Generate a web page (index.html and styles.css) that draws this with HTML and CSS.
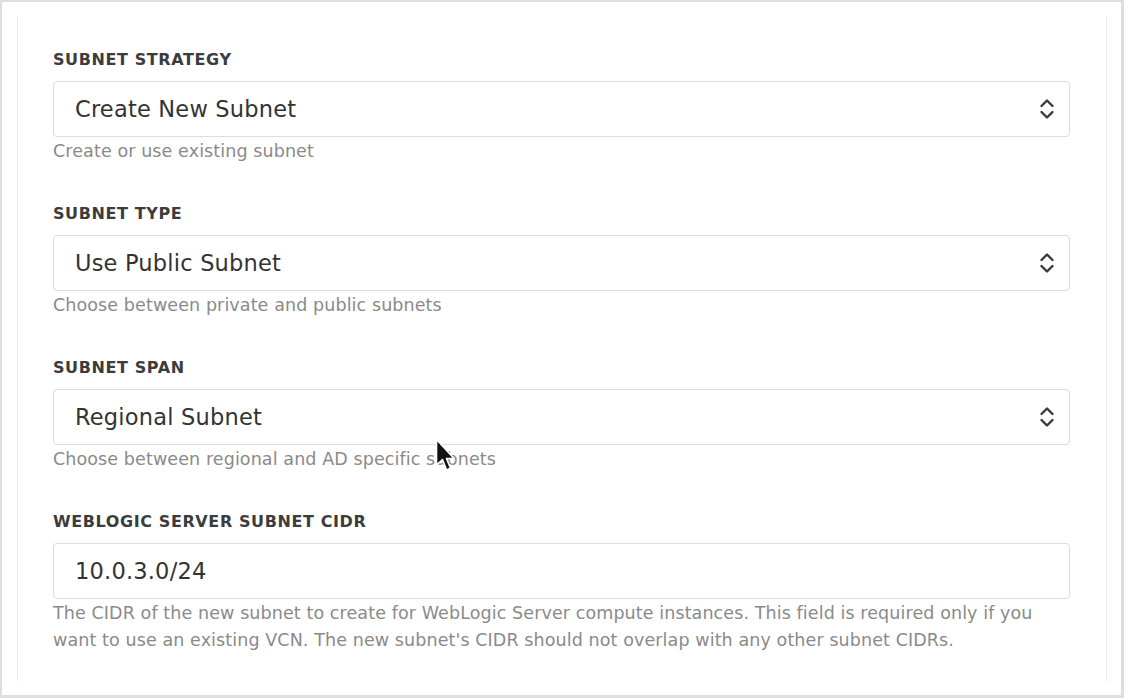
FILE: index.html
```html
<!DOCTYPE html>
<html>
<head>
<meta charset="utf-8">
<link rel="stylesheet" href="styles.css">
</head>
<body>
<div class="frame">
  <div class="panel">
    <div class="field">
      <div class="label">SUBNET STRATEGY</div>
      <div class="box select">
        <span class="value">Create New Subnet</span>
        <svg class="chev" width="16" height="22" viewBox="0 0 16 22"><path d="M2.5 8 L8 2.5 L13.5 8 M2.5 14 L8 19.5 L13.5 14" fill="none" stroke="#3a3a3a" stroke-width="2.4" stroke-linecap="round" stroke-linejoin="round"/></svg>
      </div>
      <div class="help">Create or use existing subnet</div>
    </div>
    <div class="field">
      <div class="label">SUBNET TYPE</div>
      <div class="box select">
        <span class="value">Use Public Subnet</span>
        <svg class="chev" width="16" height="22" viewBox="0 0 16 22"><path d="M2.5 8 L8 2.5 L13.5 8 M2.5 14 L8 19.5 L13.5 14" fill="none" stroke="#3a3a3a" stroke-width="2.4" stroke-linecap="round" stroke-linejoin="round"/></svg>
      </div>
      <div class="help">Choose between private and public subnets</div>
    </div>
    <div class="field">
      <div class="label">SUBNET SPAN</div>
      <div class="box select">
        <span class="value">Regional Subnet</span>
        <svg class="chev" width="16" height="22" viewBox="0 0 16 22"><path d="M2.5 8 L8 2.5 L13.5 8 M2.5 14 L8 19.5 L13.5 14" fill="none" stroke="#3a3a3a" stroke-width="2.4" stroke-linecap="round" stroke-linejoin="round"/></svg>
      </div>
      <div class="help cursor-host">Choose between regional and AD specific subnets
        <svg class="cursor" width="22" height="36" viewBox="0 0 22 36"><path d="M1.5 1.5 L1.5 27 L7.5 21.5 L11.5 32 L15.5 30.2 L11.5 20.5 L19 20.5 Z" fill="#111" stroke="#fff" stroke-width="1.6" stroke-linejoin="round"/></svg>
      </div>
    </div>
    <div class="field">
      <div class="label">WEBLOGIC SERVER SUBNET CIDR</div>
      <div class="box">
        <span class="value">10.0.3.0/24</span>
      </div>
      <div class="help">The CIDR of the new subnet to create for WebLogic Server compute instances. This field is required only if you want to use an existing VCN. The new subnet's CIDR should not overlap with any other subnet CIDRs.</div>
    </div>
  </div>
</div>
</body>
</html>
```

FILE: styles.css
```css
html, body {
  margin: 0;
  padding: 0;
  background: #fff;
}

.frame {
  box-sizing: border-box;
  width: 1124px;
  height: 698px;
  border-style: solid;
  border-color: #dedede;
  border-width: 2px 3px 3px 2px;
  padding: 14px 0 0 15px;
  background: #fff;
  font-family: "DejaVu Sans", "Liberation Sans", sans-serif;
}

.panel {
  box-sizing: border-box;
  width: 1090px;
  height: 665px;
  border-left: 1px solid #ececec;
  border-right: 1px solid #ececec;
  padding: 34px 36px 0 35px;
  display: flex;
  flex-direction: column;
  gap: 39px;
}

.field {
  display: flex;
  flex-direction: column;
}

.label {
  font-size: 16px;
  font-weight: bold;
  line-height: 20px;
  color: #3c3c3c;
  margin-bottom: 11px;
  letter-spacing: 0.6px;
}

.box {
  box-sizing: border-box;
  height: 56px;
  border: 1px solid #dcdcdc;
  border-radius: 4px;
  display: flex;
  align-items: center;
  justify-content: space-between;
  padding: 0 12px 0 21px;
}

.value {
  font-size: 22.5px;
  letter-spacing: 0.2px;
  color: #333;
}

.chev {
  margin-right: 2px;
}

.help {
  margin-top: 1px;
  font-size: 17.5px;
  line-height: 27px;
  color: #8a8a8a;
  letter-spacing: 0.1px;
}

.cursor-host {
  position: relative;
}

.cursor {
  position: absolute;
  left: 382px;
  top: -8px;
  filter: blur(0.7px);
}
```
